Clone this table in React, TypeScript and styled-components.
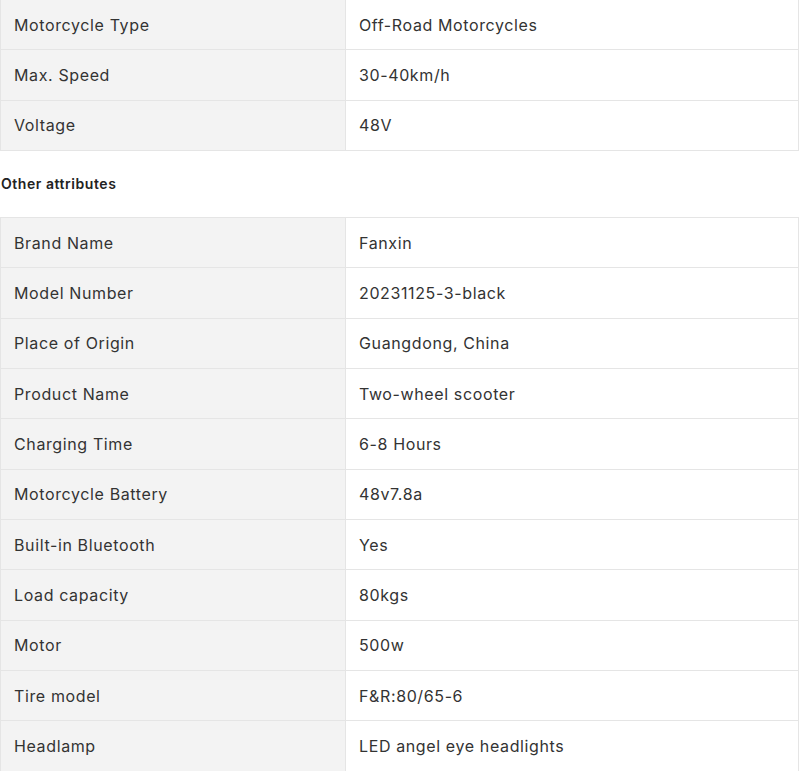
import React from "react";
import styled, { createGlobalStyle } from "styled-components";

const Global = createGlobalStyle`
  html, body { margin: 0; padding: 0; background: #fff; }
  body { font-family: Inter, "Noto Sans", sans-serif; color: #333; }
`;

const Page = styled.div`
  width: 799px;
  margin-top: -1px;
`;

const Table = styled.table`
  width: 799px;
  border-collapse: collapse;
  table-layout: fixed;
`;

const Row = styled.tr``;

const Cell = styled.td<{ $key?: boolean }>`
  border: 1px solid #e5e5e5;
  height: 50.33px;
  box-sizing: border-box;
  padding: 0 13px;
  font-size: 16px;
  line-height: 24px;
  letter-spacing: 0.62px;
  color: #333;
  vertical-align: middle;
  background: ${(p) => (p.$key ? "#f3f3f3" : "#fff")};
  width: ${(p) => (p.$key ? "345px" : "auto")};
`;

const Heading = styled.div`
  font-size: 14px;
  font-weight: 600;
  letter-spacing: 0.55px;
  color: #222;
  line-height: 20px;
  padding: 23px 0 23px 1px;
`;

const top: [string, string][] = [
  ["Motorcycle Type", "Off-Road Motorcycles"],
  ["Max. Speed", "30-40km/h"],
  ["Voltage", "48V"],
];

const other: [string, string][] = [
  ["Brand Name", "Fanxin"],
  ["Model Number", "20231125-3-black"],
  ["Place of Origin", "Guangdong, China"],
  ["Product Name", "Two-wheel scooter"],
  ["Charging Time", "6-8 Hours"],
  ["Motorcycle Battery", "48v7.8a"],
  ["Built-in Bluetooth", "Yes"],
  ["Load capacity", "80kgs"],
  ["Motor", "500w"],
  ["Tire model", "F&R:80/65-6"],
  ["Headlamp", "LED angel eye headlights"],
];

function Attrs({ rows }: { rows: [string, string][] }) {
  return (
    <Table>
      <tbody>
        {rows.map(([k, v]) => (
          <Row key={k}>
            <Cell $key>{k}</Cell>
            <Cell>{v}</Cell>
          </Row>
        ))}
      </tbody>
    </Table>
  );
}

export default function App() {
  return (
    <Page>
      <Global />
      <Attrs rows={top} />
      <Heading>Other attributes</Heading>
      <Attrs rows={other} />
    </Page>
  );
}
